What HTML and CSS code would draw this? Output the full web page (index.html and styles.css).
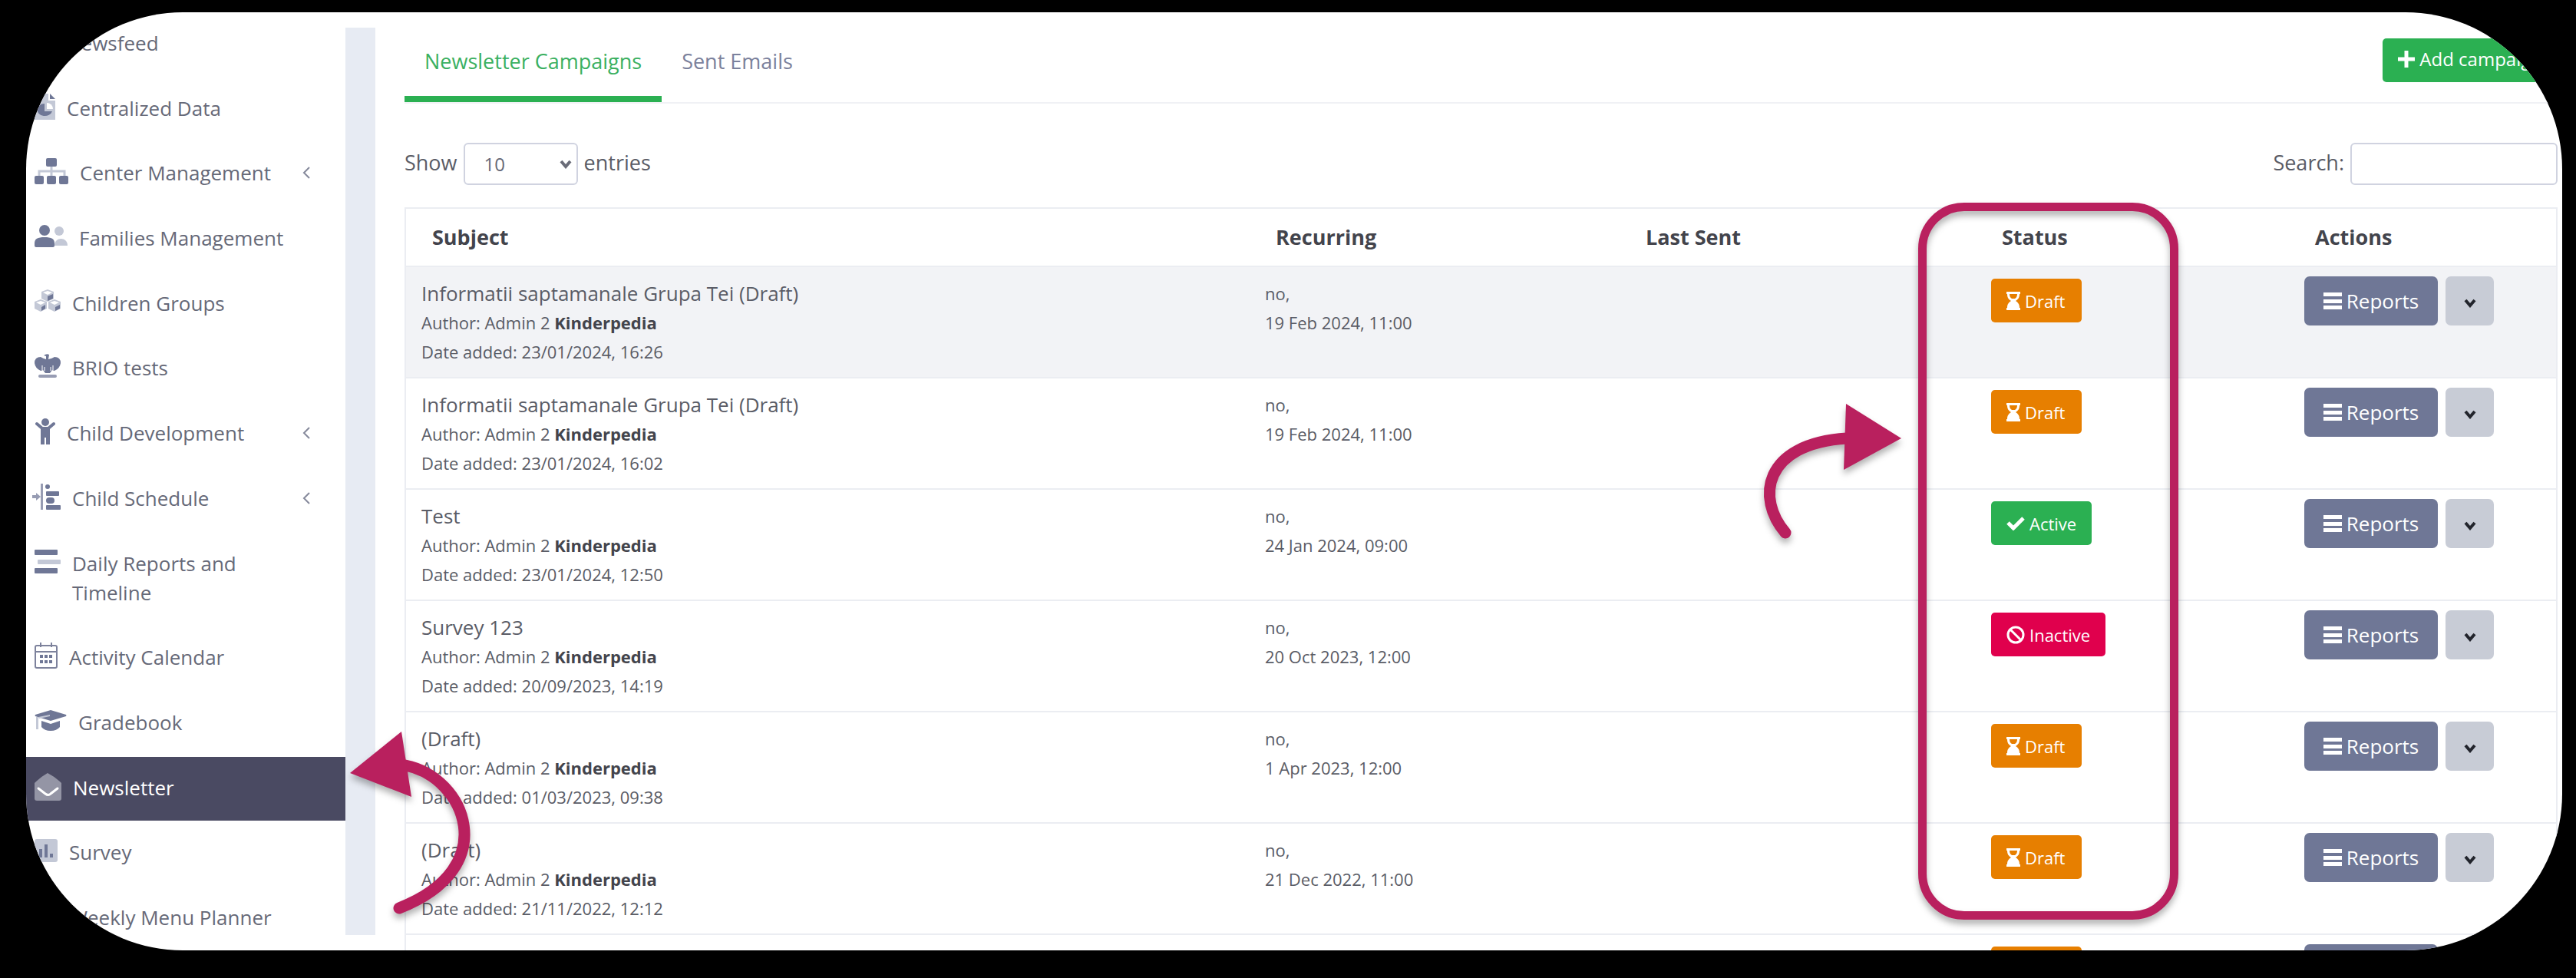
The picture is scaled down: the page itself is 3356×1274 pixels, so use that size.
FILE: index.html
```html
<!DOCTYPE html>
<html lang="en">
<head>
<meta charset="utf-8">
<title>Newsletter Campaigns</title>
<link rel="stylesheet" href="styles.css">
</head>
<body>
<svg class="symbols" aria-hidden="true">
  <symbol id="i-hourglass" viewBox="0 0 18 24"><path fill="currentColor" d="M0 0h18v3h-1c0 5-2 7-5 9 3 2 5 4 5 9h1v3H0v-3h1c0-5 2-7 5-9-3-2-5-4-5-9H0z"/><path class="cut" d="M4 3h10c0 3-1 5-3 6H7C5 8 4 6 4 3z"/></symbol>
  <symbol id="i-check" viewBox="0 0 24 18"><path fill="none" stroke="currentColor" stroke-width="5" d="M2 8l7 7L22 2"/></symbol>
  <symbol id="i-ban" viewBox="0 0 24 24"><g fill="none" stroke="currentColor" stroke-width="3"><circle cx="12" cy="12" r="10"/><path d="M5 5l14 14"/></g></symbol>
  <symbol id="i-bars" viewBox="0 0 24 22"><path fill="currentColor" d="M0 0h24v5H0zM0 9h24v5H0zM0 17h24v5H0z"/></symbol>
  <symbol id="i-down" viewBox="0 0 16 12"><path fill="none" stroke="currentColor" stroke-width="4" d="M2 2l6 7 6-7"/></symbol>
  <symbol id="i-left" viewBox="0 0 10 16"><path fill="none" stroke="currentColor" stroke-width="2" d="M9 1L2 8l7 7"/></symbol>
</svg>

<div class="frame">
  <nav class="sidebar" aria-label="Main">
    <a class="item" href="#"><svg class="icon" width="26" height="34" viewBox="0 0 26 34"><path class="soft" d="M0 4h26v26H0z"/></svg><span>Newsfeed</span></a>
    <a class="item" href="#"><svg class="icon" width="27" height="34" viewBox="0 0 27 34"><path class="soft" d="M0 0h18v9h9v25H0z"/><path d="M20 0l7 7h-7z"/><path d="M13 13v10h10a10 8 0 1 1-10-10z"/><path fill="#fff" d="M16 12a8 8 0 0 1 8 8h-8z"/></svg><span>Centralized Data</span></a>
    <a class="item" href="#"><svg class="icon" width="44" height="34" viewBox="0 0 44 34"><path fill="none" stroke="#c3c8d6" stroke-width="3" d="M22 10v13M6 24v-7h33v7"/><rect x="15" y="0" width="14" height="11" rx="2"/><rect x="0" y="23" width="12" height="11" rx="2"/><rect x="16" y="23" width="12" height="11" rx="2"/><rect x="32" y="23" width="12" height="11" rx="2"/></svg><span>Center Management</span><svg class="fold" width="10" height="16"><use href="#i-left"/></svg></a>
    <a class="item" href="#"><svg class="icon" width="43" height="34" viewBox="0 0 43 34"><g class="soft"><circle cx="32" cy="10" r="6"/><path d="M26 29c0-12 17-12 17 0z"/></g><circle cx="13" cy="9" r="7"/><path d="M0 29v-3c0-6 4-8 13-8s13 2 13 8v3q0 2-2 2H2q-2 0-2-2z"/></svg><span>Families Management</span></a>
    <a class="item" href="#"><svg class="icon" width="34" height="34" viewBox="0 0 34 34"><g class="soft"><path d="M17 1l8 3v9l-8 4-8-4V4zM8 14l8 3v9l-8 4-8-4v-9zM26 14l8 3v9l-8 4-8-4v-9z"/></g><path fill="#fff" d="M11 5l6-2 6 2-6 3zM2 18l6-2 6 2-6 3zM20 18l6-2 6 2-6 3z"/><path d="M17 10l7-3v6l-7 3zM9 24l5-3v5l-5 3zM27 24l6-3v5l-6 3z"/></svg><span>Children Groups</span></a>
    <a class="item" href="#"><svg class="icon" width="34" height="34" viewBox="0 0 34 34"><path d="M12 3q4-3 7-1l-1 6q5-1 8-3 8 0 8 8-1 7-8 10l-3-1-3 4h-6l-3-4-3 1Q1 20 0 13q0-8 8-8 3 2 7 3V4z"/><path stroke="#fff" d="M10 16v6M13 18v5M21 18v5M24 16v6"/><rect class="mid" x="5" y="28" width="24" height="4" rx="2"/></svg><span>BRIO tests</span></a>
    <a class="item" href="#"><svg class="icon" width="27" height="34" viewBox="0 0 27 34"><circle cx="14" cy="5" r="5"/><path fill="none" stroke="#6f7796" stroke-width="4" stroke-linecap="round" d="M3 7l7 6h8l7-6"/><path d="M8 11h12v23h-5v-9h-2v9H8z"/></svg><span>Child Development</span><svg class="fold" width="10" height="16"><use href="#i-left"/></svg></a>
    <a class="item" href="#"><svg class="icon icon-schedule" width="37" height="34" viewBox="0 0 37 34"><path class="mid" d="M11 0h3v34h-3zM0 15h5v-3l6 5-6 5v-3H0z"/><circle cx="20" cy="4" r="3"/><rect x="18" y="10" width="17" height="6" rx="1"/><rect x="18" y="18" width="11" height="8" rx="4"/><rect x="18" y="28" width="19" height="6" rx="1"/></svg><span>Child Schedule</span><svg class="fold" width="10" height="16"><use href="#i-left"/></svg></a>
    <a class="item" href="#"><svg class="icon" width="34" height="34" viewBox="0 0 34 34"><rect x="0" y="1" width="30" height="7" rx="1"/><rect class="soft" x="4" y="14" width="30" height="6" rx="1"/><rect x="0" y="25" width="30" height="7" rx="1"/></svg><span>Daily Reports and Timeline</span></a>
    <a class="item" href="#"><svg class="icon" width="30" height="34" viewBox="0 0 30 34"><g fill="none" stroke="#7d829c" stroke-width="2"><rect x="1" y="4" width="28" height="29" rx="2"/><path d="M1 12h28M8 0v6M22 0v6"/></g><path d="M7 16h4v4H7zM13 16h4v4h-4zM19 16h4v4h-4zM7 23h4v4H7zM13 23h4v4h-4zM19 23h4v4h-4z"/></svg><span>Activity Calendar</span></a>
    <a class="item" href="#"><svg class="icon" width="42" height="34" viewBox="0 0 42 34"><path d="M21 3l20 6q1 1 0 2l-20 6L1 11q-1-1 0-2z"/><path d="M9 17l12 4 12-4v8q-4 5-12 5T9 25z"/><path class="soft" d="M2 12h3v16H2zM5 12l15-3v2L6 14z"/></svg><span>Gradebook</span></a>
    <a class="item item-active" href="#" aria-current="page"><svg class="icon" width="35" height="36" viewBox="0 0 35 36"><path fill="#9495a5" d="M0 13Q8 5 17 0q10 5 18 13v20q0 3-3 3H3q-3 0-3-3z"/><path fill="none" stroke="#fff" stroke-width="3" stroke-linecap="round" d="M5 20l9 7q4 3 7 0l9-7"/></svg><span>Newsletter</span></a>
    <a class="item" href="#"><svg class="icon" width="30" height="34" viewBox="0 0 30 34"><rect class="soft" y="2" width="30" height="30" rx="3"/><path d="M6 15h4v11H6zM13 9h4v17h-4zM20 21h4v5h-4z"/></svg><span>Survey</span></a>
    <a class="item" href="#"><svg class="icon" width="30" height="34" viewBox="0 0 30 34"><path class="soft" d="M0 2h30v28H0z"/></svg><span>Weekly Menu Planner</span></a>
  </nav>

  <div class="gutter"></div>

  <main class="content">
    <header class="tabbar">
      <a class="tab tab-active" href="#">Newsletter Campaigns</a>
      <a class="tab" href="#">Sent Emails</a>
      <button class="add" type="button"><svg width="22" height="22" viewBox="0 0 22 22"><path stroke="currentColor" stroke-width="5" d="M11 0v22M0 11h22"/></svg>Add campaign</button>
    </header>

    <div class="tools">
      <label for="len">Show</label>
      <span class="select"><select id="len"><option>10</option><option>25</option></select><svg width="16" height="12"><use href="#i-down"/></svg></span>
      <label for="len">entries</label>
      <label class="search-label" for="search">Search:</label>
      <input id="search" type="search">
    </div>

    <table class="campaigns">
      <colgroup><col><col class="c-recurring"><col class="c-sent"><col class="c-status"><col class="c-actions"></colgroup>
      <thead><tr><th>Subject</th><th>Recurring</th><th>Last Sent</th><th>Status</th><th>Actions</th></tr></thead>
      <tbody>
        <tr class="hover"><td><div class="subject">Informatii saptamanale Grupa Tei (Draft)</div><div>Author: Admin 2 <b>Kinderpedia</b></div><div>Date added: 23/01/2024, 16:26</div></td><td>no,<br>19 Feb 2024, 11:00</td><td></td><td><span class="badge draft"><svg width="18" height="24"><use href="#i-hourglass"/></svg>Draft</span></td><td><div class="actions"><button class="reports" type="button"><svg width="24" height="22"><use href="#i-bars"/></svg>Reports</button><button class="more" type="button" aria-label="More"><svg width="16" height="12"><use href="#i-down"/></svg></button></div></td></tr>
        <tr><td><div class="subject">Informatii saptamanale Grupa Tei (Draft)</div><div>Author: Admin 2 <b>Kinderpedia</b></div><div>Date added: 23/01/2024, 16:02</div></td><td>no,<br>19 Feb 2024, 11:00</td><td></td><td><span class="badge draft"><svg width="18" height="24"><use href="#i-hourglass"/></svg>Draft</span></td><td><div class="actions"><button class="reports" type="button"><svg width="24" height="22"><use href="#i-bars"/></svg>Reports</button><button class="more" type="button" aria-label="More"><svg width="16" height="12"><use href="#i-down"/></svg></button></div></td></tr>
        <tr><td><div class="subject">Test</div><div>Author: Admin 2 <b>Kinderpedia</b></div><div>Date added: 23/01/2024, 12:50</div></td><td>no,<br>24 Jan 2024, 09:00</td><td></td><td><span class="badge active"><svg width="24" height="18"><use href="#i-check"/></svg>Active</span></td><td><div class="actions"><button class="reports" type="button"><svg width="24" height="22"><use href="#i-bars"/></svg>Reports</button><button class="more" type="button" aria-label="More"><svg width="16" height="12"><use href="#i-down"/></svg></button></div></td></tr>
        <tr><td><div class="subject">Survey 123</div><div>Author: Admin 2 <b>Kinderpedia</b></div><div>Date added: 20/09/2023, 14:19</div></td><td>no,<br>20 Oct 2023, 12:00</td><td></td><td><span class="badge inactive"><svg width="24" height="24"><use href="#i-ban"/></svg>Inactive</span></td><td><div class="actions"><button class="reports" type="button"><svg width="24" height="22"><use href="#i-bars"/></svg>Reports</button><button class="more" type="button" aria-label="More"><svg width="16" height="12"><use href="#i-down"/></svg></button></div></td></tr>
        <tr><td><div class="subject">(Draft)</div><div>Author: Admin 2 <b>Kinderpedia</b></div><div>Date added: 01/03/2023, 09:38</div></td><td>no,<br>1 Apr 2023, 12:00</td><td></td><td><span class="badge draft"><svg width="18" height="24"><use href="#i-hourglass"/></svg>Draft</span></td><td><div class="actions"><button class="reports" type="button"><svg width="24" height="22"><use href="#i-bars"/></svg>Reports</button><button class="more" type="button" aria-label="More"><svg width="16" height="12"><use href="#i-down"/></svg></button></div></td></tr>
        <tr><td><div class="subject">(Draft)</div><div>Author: Admin 2 <b>Kinderpedia</b></div><div>Date added: 21/11/2022, 12:12</div></td><td>no,<br>21 Dec 2022, 11:00</td><td></td><td><span class="badge draft"><svg width="18" height="24"><use href="#i-hourglass"/></svg>Draft</span></td><td><div class="actions"><button class="reports" type="button"><svg width="24" height="22"><use href="#i-bars"/></svg>Reports</button><button class="more" type="button" aria-label="More"><svg width="16" height="12"><use href="#i-down"/></svg></button></div></td></tr>
        <tr><td></td><td></td><td></td><td><span class="badge draft"></span></td><td><div class="actions"><span class="reports"></span></div></td></tr>
      </tbody>
    </table>
  </main>

  <div class="highlight"></div>
  <svg class="arrow arrow-menu" width="200" height="280" viewBox="440 930 200 280"><path class="shaft" d="M528 997C606 1012 656 1130 520 1183"/><path class="head" d="M523 953L456 1007L536 1038z"/></svg>
  <svg class="arrow arrow-status" width="200" height="220" viewBox="2290 510 200 220"><path class="shaft" d="M2326 694C2288 650 2296 578 2406 571"/><path class="head" d="M2405 526L2477 571L2402 612z"/></svg>
</div>
</body>
</html>
```
FILE: styles.css
```css
* { box-sizing: border-box; }

body {
  margin: 0;
  height: 100vh;
  padding: 16px 18px 36px 34px;
  background: #000;
  color: #5a5c66;
  font: 27px/38px "Open Sans", sans-serif;
}

a { color: inherit; text-decoration: none; }
button, input, select { font: inherit; }
button, .reports, .badge { border: 0; margin: 0; }
.symbols { position: absolute; width: 0; height: 0; }

.frame {
  position: relative;
  display: flex;
  height: 100%;
  overflow: hidden;
  border-radius: 204px;
  background: #fff;
}

/* Sidebar */
.sidebar {
  flex: none;
  width: 416px;
  display: flex;
  flex-direction: column;
  justify-content: space-between;
}
.item {
  display: flex;
  align-items: flex-start;
  gap: 15px;
  padding: 21px 46px 24px 11px;
  color: #666978;
  font-size: 26px;
}
.item-active { background: #4a4a62; color: #fff; }
.icon { flex: none; fill: #6f7796; }
.icon-schedule { margin-left: -3px; }
.soft { fill: #c3c8d6; }
.mid { fill: #979cb3; }
.fold { flex: none; margin: 11px 0 0 auto; color: #85899b; }

.gutter {
  flex: none;
  width: 39px;
  margin: 20px 0;
  background: #e7ebf3;
}

/* Content */
.content {
  flex: 1;
  min-width: 0;
  padding: 0 6px 0 38px;
}
.tabbar {
  display: flex;
  align-items: flex-end;
  height: 119px;
  border-bottom: 2px solid #f0f1f5;
}
.tab {
  padding: 0 26px 26px;
  border-bottom: 8px solid transparent;
  color: #7b819c;
  font-weight: 500;
}
.tab-active { color: #3bb061; border-color: #2bb052; }
.add {
  display: flex;
  align-items: center;
  gap: 6px;
  height: 57px;
  margin: 0 0 26px auto;
  padding: 0 20px 3px;
  border-radius: 5px;
  background: #2bb052;
  color: #fff;
  font-size: 24px;
}

.tools {
  display: flex;
  align-items: center;
  gap: 8px;
  padding: 51px 0 29px;
}
.tools label { padding-bottom: 4px; }
.search-label { margin-left: auto; }
.select { position: relative; }
.select svg { position: absolute; right: 8px; top: 22px; color: #6a6c78; pointer-events: none; }
select, input {
  display: block;
  height: 55px;
  border: 2px solid #d0d3e0;
  border-radius: 6px;
  background: #fff;
}
select {
  width: 149px;
  padding: 0 25px;
  appearance: none;
  color: #666978;
  font-size: 24px;
}
input { width: 270px; }

/* Table */
.campaigns {
  width: 100%;
  table-layout: fixed;
  border-collapse: separate;
  border-spacing: 0;
  border: 2px solid #ebedf2;
  border-width: 2px 2px 0;
  font-size: 22px;
}
.c-recurring { width: 482px; }
.c-sent { width: 464px; }
.c-status { width: 408px; }
.c-actions { width: 348px; }
th {
  height: 76px;
  padding: 0 34px;
  border-bottom: 2px solid #ebedf2;
  color: #43444c;
  font-size: 27px;
  font-weight: 700;
  text-align: left;
}
td {
  height: 145px;
  padding: 15px 20px 14px;
  border-bottom: 2px solid #ebedf2;
  vertical-align: top;
}
.hover td { background: #f2f3f6; }
.subject { font-size: 26px; }
b { color: #43444c; }

.badge {
  display: inline-flex;
  align-items: center;
  gap: 6px;
  height: 57px;
  min-width: 118px;
  padding: 0 20px;
  border-radius: 5px;
  color: #fff;
  vertical-align: top;
}
.draft { background: #e77f00; }
.cut { fill: #e77f00; }
.active { background: #2bb052; }
.inactive { background: #e0004d; }

.actions { display: flex; gap: 10px; margin-top: -3px; }
.reports {
  display: flex;
  align-items: center;
  justify-content: center;
  gap: 6px;
  width: 174px;
  height: 64px;
  padding: 0;
  border-radius: 7px;
  background: #6f7796;
  color: #fff;
  font-size: 26px;
}
.more {
  width: 63px;
  height: 64px;
  padding: 0;
  border-radius: 7px;
  background: #c8ccd6;
  color: #22242c;
}

/* Annotations laid over the page */
.highlight {
  position: absolute;
  top: 248px;
  right: 500px;
  width: 339px;
  height: 934px;
  border: 11px solid #b9205e;
  border-radius: 60px;
  filter: drop-shadow(0 6px 4px rgba(0, 0, 0, .3));
}
.arrow { position: absolute; filter: drop-shadow(0 6px 4px rgba(0, 0, 0, .3)); }
.arrow-menu { left: 406px; top: 914px; }
.arrow-status { right: 848px; top: 494px; }
.shaft { fill: none; stroke: #b9205e; stroke-width: 15; stroke-linecap: round; }
.head { fill: #b9205e; }
```
